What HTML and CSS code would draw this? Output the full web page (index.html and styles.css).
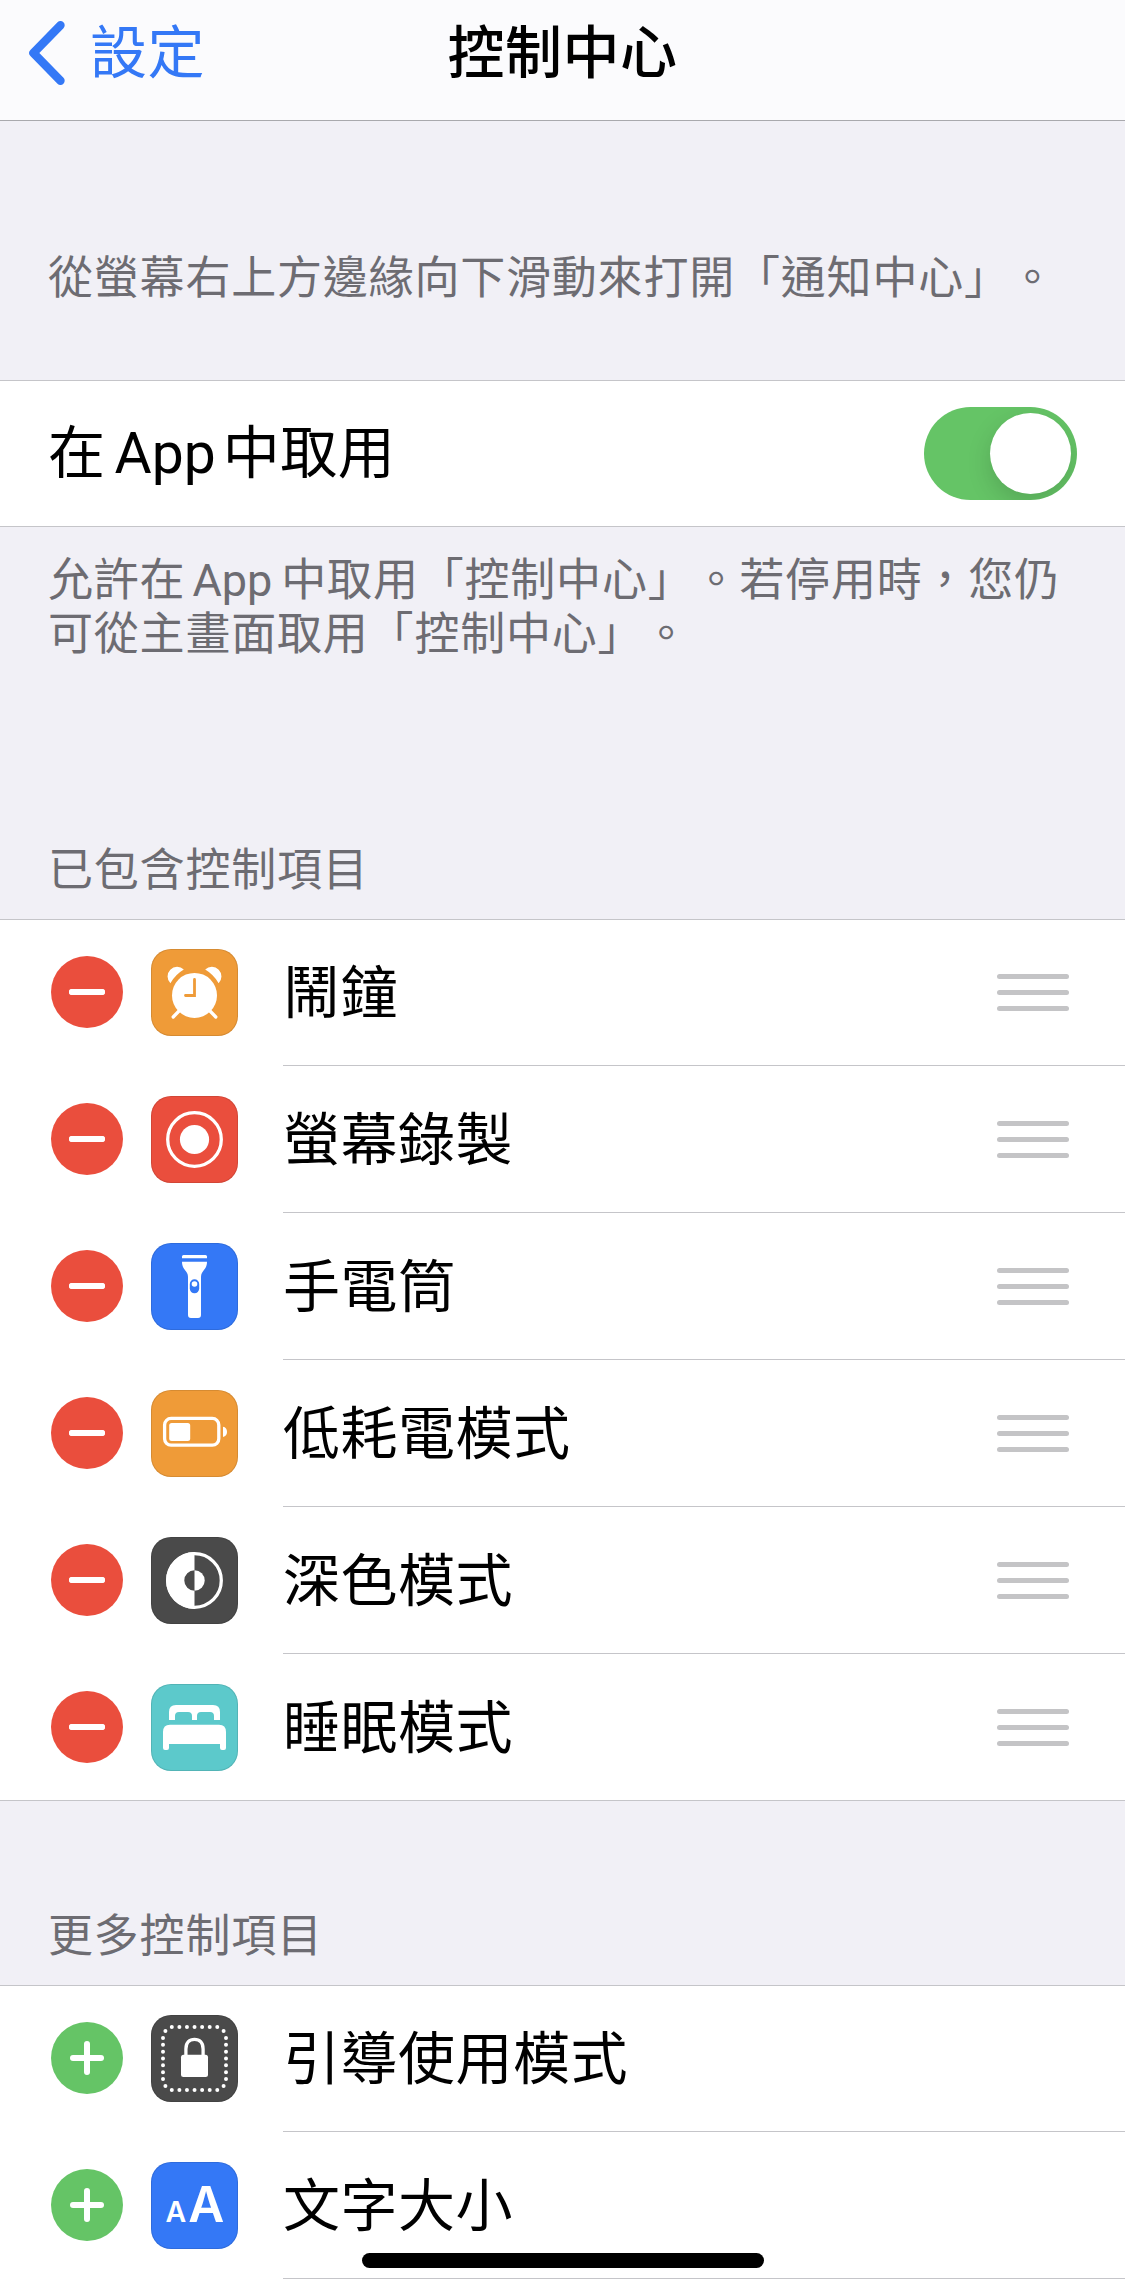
FILE: index.html
```
<!DOCTYPE html>
<html lang="zh-Hant-TW">
  <head>
    <meta charset="UTF-8" />
    <meta name="viewport" content="width=device-width, initial-scale=1.0" />
    <title>控制中心</title>
    <link rel="stylesheet" href="styles.css">
  </head>
  <body>
    <header class="navbar">
      <a class="back">
        <svg class="chevron" width="40" height="66" viewBox="0 0 40 66">
          <path d="M34.5 4.2 L7.4 32 L34.5 59.8" />
        </svg>
        <span>設定</span>
      </a>
      <h1>控制中心</h1>
    </header>

    <main>
      <p class="note intro">從螢幕右上方邊緣向下滑動來打開「通知中心」。</p>

      <div class="list">
        <div class="row toggle-row">
          <span class="label">在<span class="latin">App</span>中取用</span>
          <span class="switch"><span class="knob"></span></span>
        </div>
      </div>
      <p class="note footnote">允許在<span class="latin">App</span>中取用「控制中心」。若停用時，您仍<br>可從主畫面取用「控制中心」。</p>

      <h2 class="note">已包含控制項目</h2>
      <div class="list">
        <div class="row">
          <span class="badge remove"></span>
          <svg class="icon orange" viewBox="0 0 87 87">
            <circle class="fill" cx="43.5" cy="46.4" r="22.5" />
            <path class="fill" d="M19.4 34.2 A9.4 9.4 0 1 1 32.8 20.6 Q24.5 25.5 19.4 34.2 Z" />
            <path class="fill" d="M67.6 34.2 A9.4 9.4 0 1 0 54.2 20.6 Q62.5 25.5 67.6 34.2 Z" />
            <path class="line" d="M28 62 L22.2 68 M59 62 L64.8 68" />
            <path class="hands" d="M43.5 30.5 V46.5 H34.5" />
          </svg>
          <span class="label">鬧鐘</span>
          <span class="handle"><i></i><i></i><i></i></span>
        </div>
        <div class="row">
          <span class="badge remove"></span>
          <svg class="icon red" viewBox="0 0 87 87">
            <circle class="line" cx="43.5" cy="43.5" r="26.8" />
            <circle class="fill" cx="43.5" cy="43.5" r="14.6" />
          </svg>
          <span class="label">螢幕錄製</span>
          <span class="handle"><i></i><i></i><i></i></span>
        </div>
        <div class="row">
          <span class="badge remove"></span>
          <svg class="icon blue" viewBox="0 0 87 87">
            <path class="fill" d="M31 15.2 V13.5 Q31 12 32.5 12 H54.5 Q56 12 56 13.5 V15.2 Z" />
            <path class="fill" d="M31 18.8 H56 C56 27 50 27.5 50 34 V72 Q50 75 47 75 H40 Q37 75 37 72 V34 C37 27.5 31 27 31 18.8 Z" />
            <rect class="cut" x="38.8" y="36.3" width="9.4" height="14" rx="4.7" />
            <circle class="fill" cx="43.5" cy="41" r="2.8" />
          </svg>
          <span class="label">手電筒</span>
          <span class="handle"><i></i><i></i><i></i></span>
        </div>
        <div class="row">
          <span class="badge remove"></span>
          <svg class="icon orange" viewBox="0 0 87 87">
            <rect class="line" x="13.6" y="28.4" width="54.2" height="26.8" rx="6.5" />
            <rect class="fill" x="18.2" y="33" width="21" height="18" rx="2.5" />
            <path class="fill" d="M72 36.7 Q76 37.5 76 41.8 Q76 46.2 72 47 Z" />
          </svg>
          <span class="label">低耗電模式</span>
          <span class="handle"><i></i><i></i><i></i></span>
        </div>
        <div class="row">
          <span class="badge remove"></span>
          <svg class="icon dark" viewBox="0 0 87 87">
            <circle class="line" cx="43.5" cy="43.5" r="26.8" />
            <path class="fill" d="M43.5 15 A28.5 28.5 0 0 0 43.5 72 V53.7 A10.2 10.2 0 0 1 43.5 33.3 Z" />
            <path class="fill" d="M43.5 33.3 A10.2 10.2 0 0 1 43.5 53.7 Z" />
          </svg>
          <span class="label">深色模式</span>
          <span class="handle"><i></i><i></i><i></i></span>
        </div>
        <div class="row">
          <span class="badge remove"></span>
          <svg class="icon teal" viewBox="0 0 87 87">
            <path class="fill" d="M18 36 V28 Q18 21 25 21 H62 Q69 21 69 28 V36 H63 V32 Q63 28 59 28 H50 Q46 28 46 32 V36 H41 V32 Q41 28 37 28 H28 Q24 28 24 32 V36 Z" />
            <path class="fill" d="M12 64 V48 Q12 40.7 19 40.7 H68 Q75 40.7 75 48 V64 Q75 66 73 66 H71 Q69 66 69 64 V60 H18 V64 Q18 66 16 66 H14 Q12 66 12 64 Z" />
          </svg>
          <span class="label">睡眠模式</span>
          <span class="handle"><i></i><i></i><i></i></span>
        </div>
      </div>

      <h2 class="note more">更多控制項目</h2>
      <div class="list">
        <div class="row">
          <span class="badge add"></span>
          <svg class="icon dark" viewBox="0 0 87 87">
            <path class="dots-h" d="M20.8 12 H66.5 M20.8 75 H66.5" />
            <path class="dots-v" d="M12 23 V64.2 M75 23 V64.2" />
            <path class="dots-h" d="M14.4 16 h0.01 M72.6 16 h0.01 M14.4 71 h0.01 M72.6 71 h0.01" />
            <rect class="fill" x="30" y="39.7" width="27" height="22.3" rx="2.5" />
            <path class="line" d="M34.9 40.5 V34 C34.9 27.5 38.5 24.4 43.5 24.4 C48.5 24.4 52.1 27.5 52.1 34 V40.5" />
          </svg>
          <span class="label">引導使用模式</span>
        </div>
        <div class="row">
          <span class="badge add"></span>
          <svg class="icon blue" viewBox="0 0 87 87">
            <text x="14.4" y="60" font-size="28.5">A</text>
            <text x="37.2" y="60" font-size="49.5">A</text>
          </svg>
          <span class="label">文字大小</span>
        </div>
        <div class="row"></div>
      </div>
    </main>

    <div class="home-indicator"></div>
  </body>
</html>
```
FILE: styles.css
```
html {
  height: 100%;
  overflow: hidden;
}

body {
  display: flex;
  flex-direction: column;
  font-family: Roboto, "Noto Sans CJK TC", sans-serif;
  margin: 0;
  height: 100%;
  overflow: hidden;
  background-color: #f1f0f6;
  color: #000;
  text-spacing-trim: space-all;
}

main {
  flex: 1;
  min-height: 0;
  overflow: hidden;
}

.navbar {
  display: grid;
  flex-shrink: 0;
  grid-template-columns: 1fr auto 1fr;
  align-items: center;
  box-sizing: border-box;
  height: 121px;
  padding: 0 26px 12px;
  background-color: #fbfbfd;
  border-bottom: 1px solid #a9a9ad;
}

.navbar h1 {
  margin: 0;
  font-size: 57px;
  font-weight: 500;
  letter-spacing: 0.5px;
  line-height: 80px;
}

.back {
  display: flex;
  align-items: center;
  gap: 24px;
  color: #3478f6;
  font-size: 57px;
  letter-spacing: 0.5px;
  line-height: 80px;
}

.chevron path {
  fill: none;
  stroke: #3478f6;
  stroke-width: 8.4;
  stroke-linecap: round;
  stroke-linejoin: round;
}

.note {
  margin: 0;
  padding: 0 48px;
  color: #6d6c72;
  font-size: 45px;
  font-weight: 400;
  letter-spacing: 0.8px;
  line-height: 54px;
}

.intro {
  padding-top: 131px;
  padding-bottom: 74px;
}

.footnote {
  padding-top: 27px;
  padding-bottom: 182px;
}

h2.note {
  padding-bottom: 21px;
}

h2.more {
  padding-top: 109px;
}

.latin {
  margin: 0 7px 0 9px;
  letter-spacing: 0;
}

.footnote .latin {
  margin: 0 9px 0 7px;
}

.list {
  background-color: #fff;
  border-top: 1px solid #c5c5c9;
  border-bottom: 1px solid #c5c5c9;
}

.row {
  display: flex;
  align-items: center;
  height: 145px;
  padding-left: 51px;
}

.row + .row {
  padding-top: 1px;
}

.label {
  font-size: 57px;
  letter-spacing: 0.5px;
  line-height: 80px;
}

.row .icon + .label {
  flex: 1;
  margin-left: 45px;
  padding-top: 2px;
}

/* inset separators between rows */
.row:not(:last-child) {
  border-bottom: 1px solid;
  border-image: linear-gradient(to right, transparent 283px, #c5c5c9 283px) 1;
}

.toggle-row {
  justify-content: space-between;
  padding: 0 48px;
}

.switch {
  box-sizing: border-box;
  width: 153px;
  height: 93px;
  padding: 6px;
  border-radius: 47px;
  background-color: #65c466;
  overflow: hidden;
}

.knob {
  display: block;
  width: 81px;
  height: 81px;
  margin-left: auto;
  border-radius: 50%;
  background-color: #fff;
  box-shadow: 0 9px 24px rgba(0, 0, 0, 0.15);
}

.badge {
  width: 72px;
  height: 72px;
  margin-right: 28px;
  margin-bottom: 2px;
  border-radius: 50%;
  display: grid;
  place-items: center;
}

.badge::before,
.badge::after {
  content: "";
  grid-area: 1 / 1;
  width: 36px;
  height: 6px;
  border-radius: 3px;
  background-color: #fff;
}

.remove {
  background-color: #ea4e3d;
}

.add {
  background-color: #65c466;
}

.add::before {
  width: 34px;
}

.add::after {
  width: 6px;
  height: 34px;
}

.icon {
  width: 87px;
  height: 87px;
  border-radius: 20px;
  box-shadow: inset 0 0 0 1px rgba(0, 0, 0, 0.1);
}

.orange { background-color: #ef9b38; }
.red { background-color: #ea4e3d; }
.blue { background-color: #3478f6; }
.dark { background-color: #4a4a4a; }
.teal { background-color: #5cc9cb; }

.fill {
  fill: #fff;
}

.cut {
  fill: #3478f6;
}

.line,
.hands,
.dots-h,
.dots-v {
  fill: none;
  stroke: #fff;
  stroke-width: 3.3;
  stroke-linecap: round;
}

.hands {
  stroke: #ef9b38;
  stroke-width: 2.8;
}

.dots-h,
.dots-v {
  stroke-width: 4;
  stroke-dasharray: 0 7.58;
}

.dots-v {
  stroke-dasharray: 0 6.83;
}

.icon text {
  fill: #fff;
  font-family: Inter, sans-serif;
  font-weight: 600;
}

.handle {
  display: flex;
  flex-direction: column;
  gap: 11px;
  width: 72px;
  margin-right: 56px;
}

.handle i {
  height: 5px;
  border-radius: 2.5px;
  background-color: #c4c4c6;
}

.home-indicator {
  position: fixed;
  bottom: 24px;
  left: 362px;
  width: 402px;
  height: 15px;
  border-radius: 7.5px;
  background-color: #000;
}
```
